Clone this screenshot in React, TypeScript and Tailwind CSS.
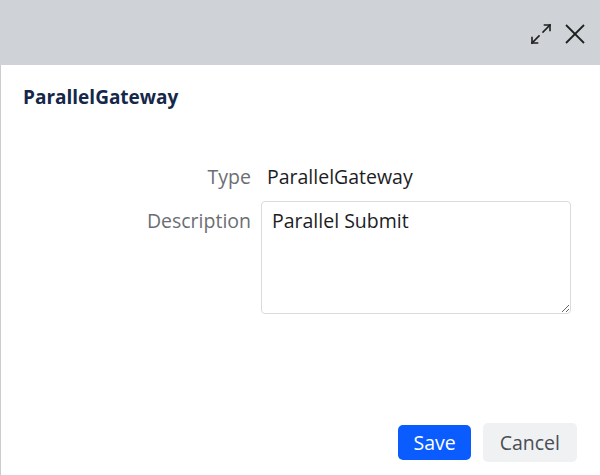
import { useState } from "react";

function MaximizeIcon() {
  return (
    <svg width="24" height="24" viewBox="0 0 24 24" fill="none" stroke="#1f1f1f" strokeWidth="1.6" strokeLinecap="square">
      <path d="M14 10 L21 3" />
      <path d="M15.5 3 H21 V8.5" />
      <path d="M10 14 L3 21" />
      <path d="M3 15.5 V21 H8.5" />
    </svg>
  );
}

function CloseIcon() {
  return (
    <svg width="22" height="22" viewBox="0 0 22 22" fill="none" stroke="#1f1f1f" strokeWidth="1.8">
      <path d="M2 2 L20 20" />
      <path d="M20 2 L2 20" />
    </svg>
  );
}

export default function App() {
  const [description, setDescription] = useState("Parallel Submit");

  return (
    <div className="w-[600px] h-[475px] flex flex-col bg-white overflow-hidden" style={{ fontFamily: '"Open Sans", "Noto Sans", sans-serif' }}>
      <div className="h-[65px] shrink-0 bg-[#cfd3d7] flex items-center justify-end gap-[11px] pr-[14px] pt-[2px]">
        <button className="flex items-center justify-center">
          <MaximizeIcon />
        </button>
        <button className="flex items-center justify-center">
          <CloseIcon />
        </button>
      </div>

      <div className="flex-1 flex flex-col border-l border-[#c9cdd1]">
        <h1 className="pl-[22px] pt-[19px] text-[19px] leading-[26px] font-bold text-[#15284a]">ParallelGateway</h1>

        <div className="mt-[54px] grid grid-cols-[250px_1fr] gap-x-[10px] gap-y-[11px] pr-[29px]">
          <div className="text-right text-[19.5px] leading-[26px] text-[#6b6e73]">Type</div>
          <div className="pl-[6px] text-[19.5px] leading-[26px] text-[#1d1d1f]">ParallelGateway</div>

          <div className="text-right text-[19.5px] leading-[26px] text-[#6b6e73] pt-[7px]">Description</div>
          <textarea
            value={description}
            onChange={(e) => setDescription(e.target.value)}
            className="h-[113px] w-full border border-[#d9dcdf] rounded-[4px] px-[10px] pt-[6px] text-[19.5px] leading-[26px] text-[#1d1d1f] outline-none resize-y"
          />
        </div>

        <div className="mt-auto mb-[13px] flex items-center justify-end gap-[12px] pr-[23px]">
          <button className="h-[35px] px-[15px] rounded-[5px] bg-[#0a5cff] text-white text-[19.5px] leading-[26px] font-medium">Save</button>
          <button className="h-[39px] px-[17px] rounded-[5px] bg-[#f0f1f3] text-[#4a4d52] text-[19.5px] leading-[26px]">Cancel</button>
        </div>
      </div>
    </div>
  );
}
